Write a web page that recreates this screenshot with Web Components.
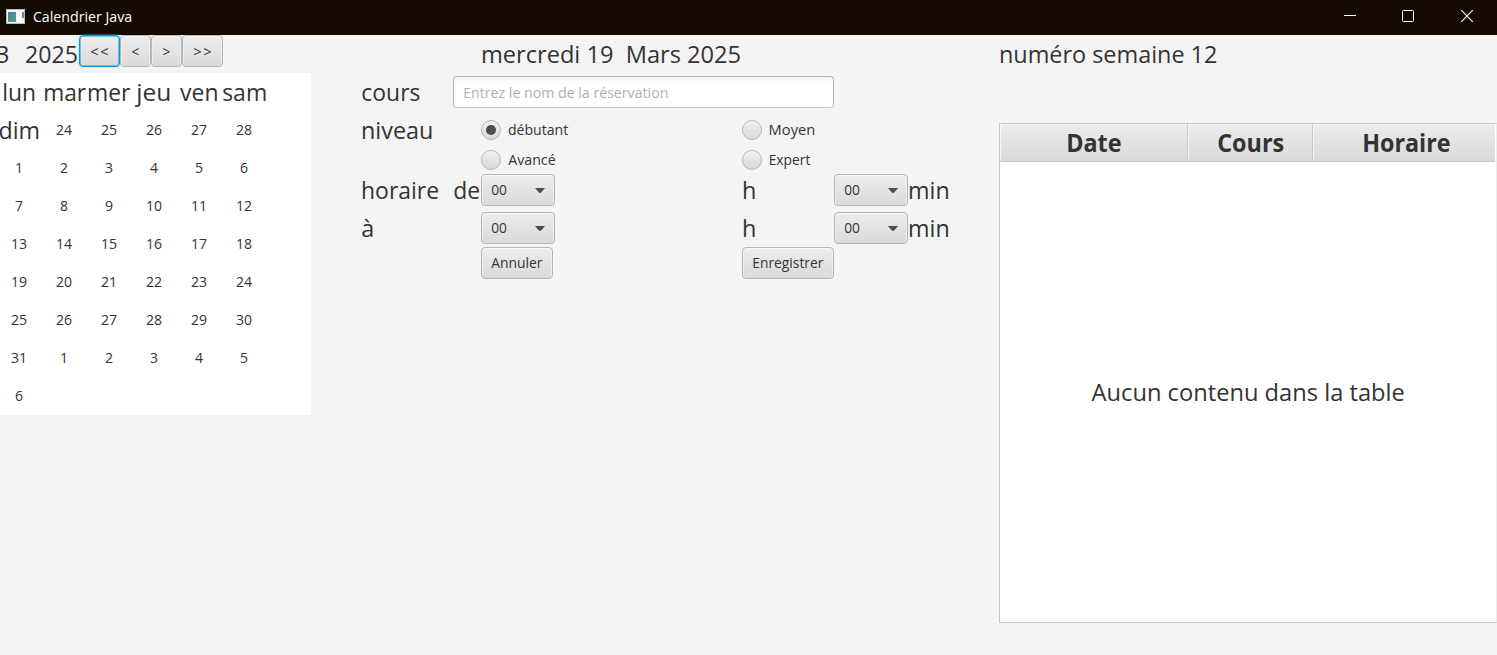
<!DOCTYPE html>
<html lang="fr">
<head>
<meta charset="utf-8">
<title>Calendrier Java</title>
<style>
html,body{margin:0;height:100%;overflow:hidden}
body{font-family:"Open Sans","Noto Sans",sans-serif;color:#333;background:#f4f4f4}
</style>
</head>
<body>
<app-window></app-window>
<script>
const FAMILY='"Open Sans","Noto Sans",sans-serif';
const ctx=document.createElement('canvas').getContext('2d');
class Base extends HTMLElement{
  constructor(){super();this.attachShadow({mode:'open'})}
  connectedCallback(){this.shadowRoot.innerHTML=`<style>${this.css()}</style>${this.html()}`;this.ready&&this.ready()}
}

customElements.define('fit-text',class extends Base{
  css(){
    const big=this.hasAttribute('big');
    this.size=+(this.getAttribute('size')||(big?24.5:14.8));
    return `:host{display:inline-block;flex:none;line-height:${big?38:20}px;height:${big?38:20}px;font-size:${this.size}px;white-space:pre;text-align:left}
    span{display:inline-block;transform-origin:0 0}`}
  html(){return '<span><slot></slot></span>'}
  ready(){
    const s=this.shadowRoot.querySelector('span'),t=this.textContent,ls=this.getAttribute('ls')||'0px';
    const big=this.hasAttribute('big'),weight=this.hasAttribute('bold')?700:400;
    const up=(big?0:-1)+ +(this.getAttribute('dy')||0),dx=+(this.getAttribute('dx')||0);
    this.style.fontWeight=weight;s.style.letterSpacing=ls;
    ctx.font=`${weight} ${this.size}px ${FAMILY}`;ctx.letterSpacing=ls;
    const m=ctx.measureText(t);
    if(!this.hasAttribute('w')){
      this.style.width=m.width*.95+'px';
      s.style.transform=`translate(${dx}px,${up}px) scaleX(.95)`;
      return;
    }
    const ink=m.actualBoundingBoxLeft+m.actualBoundingBoxRight,w=+this.getAttribute('w'),k=(w-(big?1:.4))/ink;
    this.style.width=w+'px';
    s.style.transform=`translate(${m.actualBoundingBoxLeft*k+(big?.9:.2)+dx}px,${up}px) scaleX(${k})`;
  }
});

customElements.define('title-bar',class extends Base{
  css(){return `:host{display:flex;align-items:center;height:35px;background:#140a00;color:#fff}
  .ico{margin:0 8px 3px 6px}.sp{flex:1}.ctl{display:flex}.ctl svg{display:block}fit-text{margin-top:-2px}`}
  html(){return `<svg class="ico" width="19" height="15" viewBox="0 0 19 15"><defs><linearGradient id="g" x2="1" y2="1"><stop stop-color="#4a7fae"/><stop offset="1" stop-color="#4fa878"/></linearGradient></defs><rect width="19" height="15" fill="#b9bcc0"/><rect x="1" y="1" width="17" height="13" fill="#f5f5f5"/><rect x="2" y="3" width="8" height="10" fill="url(#g)"/><rect x="11" y="3" width="4" height="10" fill="#fff"/><rect x="16" y="3" width="2" height="6" fill="#4a9b8e"/></svg>
  <fit-text w="99.5" dx="-.3">${this.getAttribute('text')}</fit-text><span class="sp"></span>
  <div class="ctl"><svg width="58" height="35"><path d="M23 15.5h12" stroke="#fff"/></svg>
  <svg width="58" height="35"><rect x="23.5" y="10.5" width="11" height="11" rx="1" fill="none" stroke="#fff"/></svg>
  <svg width="60" height="35"><path d="M24.2 10.2l11.6 11.6M35.8 10.2l-11.6 11.6" stroke="#fff" stroke-width="1.1"/></svg></div>`}
});

customElements.define('fx-button',class extends Base{
  css(){return `:host{display:flex;box-sizing:border-box;height:32px;align-items:center;justify-content:center;border:1px solid #b5b5b5;border-radius:4px;background:linear-gradient(#ededed,#dadada);box-shadow:inset 0 1px #f8f8f8,inset 1px 0 #efefef,inset -1px 0 #efefef;padding-bottom:1px}
  :host([focused]){border-color:#039ed3;box-shadow:inset 0 0 0 .5px #039ed3,0 0 2px #7fd0ea}`}
  html(){return '<slot></slot>'}
});

customElements.define('fx-combo',class extends Base{
  css(){return `:host{display:flex;box-sizing:border-box;width:74px;height:32px;align-items:center;justify-content:space-between;padding:0 9px 1px 9px;border:1px solid #b5b5b5;border-radius:4px;background:linear-gradient(#ededed,#dadada);box-shadow:inset 0 1px #f8f8f8,inset 1px 0 #efefef,inset -1px 0 #efefef}
  svg{display:block;margin-top:1px}`}
  html(){return `<fit-text w="15.7">00</fit-text><svg width="10" height="5"><path d="M0 0h10Q6 5 5 5Q4 5 0 0z" fill="#4d4d4d"/></svg>`}
});

customElements.define('fx-radio',class extends Base{
  css(){return `:host{display:flex;align-items:center;gap:7.3px;height:22px}
  i{box-sizing:border-box;width:20px;height:20px;border-radius:50%;border:1px solid #b5b5b5;background:linear-gradient(#efefef,#dadada);box-shadow:inset 0 1px #f8f8f8;display:flex;align-items:center;justify-content:center}
  :host([checked]) i::after{content:"";width:10px;height:10px;border-radius:50%;background:#4d4d4d}`}
  html(){return '<i></i><slot></slot>'}
});

customElements.define('fx-field',class extends Base{
  css(){return `:host{display:flex;box-sizing:border-box;height:32px;align-items:center;padding:1px 9px 0 9.5px;border:1px solid #b9b9b9;border-bottom-color:#c6c6c6;border-radius:4px;background:linear-gradient(#f2f2f2,#fff 5px);color:#b0b0b0}`}
  html(){return '<slot></slot>'}
});

customElements.define('month-pane',class extends Base{
  css(){return `:host{display:block;width:311px}
  .nav{display:flex;height:38px;align-items:flex-start}
  .nav .m{margin-left:-4px}.nav .y{margin:0 2.5px 0 16px}
  .cal{display:grid;grid-template-columns:repeat(6,45px);grid-auto-rows:38px;place-items:center;margin-left:-4px;width:315px;background:#fff}
  `}
  html(){
    const d=[['lun',32,.2],['mar',42,1.2],['mer',42.5,1],['jeu',36,-2.6],['ven',38.5,.2],['sam',43.5,.2],['dim',40,-.4]];
    const n=[24,25,26,27,28];for(let i=1;i<32;i++)n.push(i);for(let i=1;i<7;i++)n.push(i);
    return `<div class="nav"><fit-text class="m" big w="12.5">3</fit-text><fit-text class="y" big w="52">2025</fit-text>
    <fx-button focused style="width:41px"><fit-text ls="1.8px" w="18.5" dy="1">&lt;&lt;</fit-text></fx-button><fx-button style="width:31px"><fit-text w="7.8" dy="1" dx="-.8">&lt;</fit-text></fx-button><fx-button style="width:31px"><fit-text w="7.8" dy="1" dx="-.8">&gt;</fit-text></fx-button><fx-button style="width:41px"><fit-text ls="1.8px" w="18.5" dy="1">&gt;&gt;</fit-text></fx-button></div>
    <div class="cal">${d.map(x=>`<fit-text big w="${x[1]}" dx="${x[2]}">${x[0]}</fit-text>`).join('')}${n.map(x=>`<fit-text dx="1">${x}</fit-text>`).join('')}</div>`}
});

customElements.define('booking-form',class extends Base{
  css(){return `:host{display:grid;width:588px;grid-template-columns:92px 28px 261px 92px 74px 41px;grid-template-rows:38px 38px 38px 22px 38px 38px 32px;align-items:center;justify-items:start}
  fx-field{width:381px}fit-text[big]{margin-left:1px}`}
  html(){
    const a=(r,c,s=1)=>`style="grid-row:${r};grid-column:${c}/span ${s}"`;
    return `<fit-text big w="258.2" ${a(1,3,2)}>mercredi 19  Mars 2025</fit-text>
    <fit-text big w="58.5" dx="-.6" ${a(2,1)}>cours</fit-text><fx-field ${a(2,2,3)}><fit-text w="203.5">Entrez le nom de la réservation</fit-text></fx-field>
    <fit-text big w="69.5" ${a(3,1)}>niveau</fit-text><fx-radio checked ${a(3,3)}><fit-text w="60.5" dx="-.3">débutant</fit-text></fx-radio><fx-radio ${a(3,4)}><fit-text w="45" dx=".4">Moyen</fit-text></fx-radio>
    <fx-radio ${a(4,3)}><fit-text w="47.5">Avancé</fit-text></fx-radio><fx-radio ${a(4,4)}><fit-text w="41" dx=".4">Expert</fit-text></fx-radio>
    <fit-text big w="76.5" ${a(5,1)}>horaire</fit-text><fit-text big w="26.2" dx="-.6" ${a(5,2)}>de</fit-text><fx-combo ${a(5,3)}></fx-combo><fit-text big w="12.5" ${a(5,4)}>h</fit-text><fx-combo ${a(5,5)}></fx-combo><fit-text big w="39.8" ${a(5,6)}>min</fit-text>
    <fit-text big w="11.5" dx="-.8" ${a(6,1)}>à</fit-text><fx-combo ${a(6,3)}></fx-combo><fit-text big w="12.5" ${a(6,4)}>h</fit-text><fx-combo ${a(6,5)}></fx-combo><fit-text big w="39.8" ${a(6,6)}>min</fit-text>
    <fx-button style="grid-row:7;grid-column:3;width:72px"><fit-text w="51.5">Annuler</fit-text></fx-button><fx-button style="grid-row:7;grid-column:4;width:92px"><fit-text w="70.5">Enregistrer</fit-text></fx-button>`}
});

customElements.define('week-table',class extends Base{
  css(){return `:host{display:block;width:498px}
  .wk{height:88px;padding-left:1px}
  .t{box-sizing:border-box;height:500px;border:1px solid #c8c8c8;border-right-color:#ececec;background:#fff;display:flex;flex-direction:column}
  .h{display:grid;grid-template-columns:188px 125px 1fr;height:38px}
  .h div{box-sizing:border-box;height:38px;display:flex;justify-content:center;align-items:center;border-right:1px solid #c8c8c8;border-bottom:1px solid #c8c8c8;background:linear-gradient(#ececec,#dadada);box-shadow:inset 1px 1px #f6f6f6}
  .h div:last-child{border-right-color:#fff}
  .b{flex:1;display:flex;align-items:center;justify-content:center}`}
  html(){return `<div class="wk"><fit-text big w="216.5">numéro semaine 12</fit-text></div>
  <div class="t"><div class="h"><div><fit-text big bold w="54" dx=".2">Date</fit-text></div><div><fit-text big bold w="67" dx=".2">Cours</fit-text></div><div><fit-text big bold w="87" dx="2.2">Horaire</fit-text></div></div><div class="b"><fit-text big w="313.5" dx="-.3">Aucun contenu dans la table</fit-text></div></div>`}
});

customElements.define('app-window',class extends Base{
  css(){return `:host{display:block;width:1497px;height:655px;overflow:hidden;background:#f4f4f4}
  main{display:flex;align-items:flex-start}booking-form{margin-left:50px;margin-right:50px}`}
  html(){return `<title-bar text="Calendrier Java"></title-bar><main><month-pane></month-pane><booking-form></booking-form><week-table></week-table></main>`}
});
</script>
</body>
</html>
